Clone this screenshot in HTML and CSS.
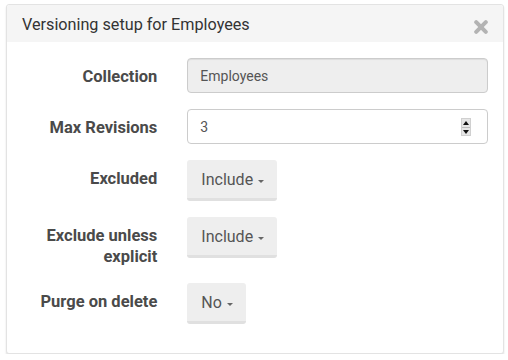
FILE: index.html
```html
<!DOCTYPE html>
<html>
<head>
<meta charset="utf-8">
<link rel="stylesheet" href="styles.css">
</head>
<body>
<div class="modal">
  <div class="modal-header">
    <h4 class="modal-title">Versioning setup for Employees</h4>
    <span class="close" aria-label="Close">
      <svg width="14" height="14" viewBox="0 0 14 14"><path d="M2.2 2.2 L11.8 11.8 M11.8 2.2 L2.2 11.8" stroke="#b3b3b3" stroke-width="4" stroke-linecap="round"/></svg>
    </span>
  </div>
  <div class="modal-body">
    <div class="form-group">
      <label class="control-label">Collection</label>
      <div class="control"><div class="form-control readonly">Employees</div></div>
    </div>
    <div class="form-group">
      <label class="control-label">Max Revisions</label>
      <div class="control">
        <div class="form-control number">3
          <span class="spinner"><span class="up"></span><span class="down"></span></span>
        </div>
      </div>
    </div>
    <div class="form-group">
      <label class="control-label">Excluded</label>
      <div class="control"><button class="btn">Include <span class="caret"></span></button></div>
    </div>
    <div class="form-group">
      <label class="control-label">Exclude unless explicit</label>
      <div class="control"><button class="btn">Include <span class="caret"></span></button></div>
    </div>
    <div class="form-group last">
      <label class="control-label">Purge on delete</label>
      <div class="control"><button class="btn">No <span class="caret"></span></button></div>
    </div>
  </div>
</div>
</body>
</html>
```

FILE: styles.css
```css
* { box-sizing: border-box; }
html, body { margin: 0; padding: 0; background: #fff; }
body {
  font-family: Roboto, "Liberation Sans", sans-serif;
  color: #333;
  padding: 4px 4px 0 6px;
}
.modal {
  width: 498px;
  border: 1px solid #e3e3e3;
  border-radius: 3px;
  background: #fff;
  box-shadow: 0 2px 2px rgba(0,0,0,0.12);
}
.modal-header {
  height: 37px;
  background: #f5f5f5;
  display: flex;
  align-items: center;
  justify-content: space-between;
  padding: 0 15px;
  border-radius: 3px 3px 0 0;
}
.modal-title {
  margin: 3px 0 0;
  font-size: 16.2px;
  font-weight: 400;
  color: #333;
  line-height: 20px;
}
.close {
  display: flex;
  width: 14px;
  height: 14px;
  margin-top: 6px;
}
.modal-body {
  padding: 16px 15px 13px;
}
.form-group {
  display: flex;
  margin: 0 -15px 16px;
}
.control-label {
  width: 33.3333%;
  padding: 8px 15px 0;
  text-align: right;
  font-weight: 700;
  font-size: 16.5px;
  line-height: 21px;
  color: #4a4a4a;
}
.control {
  width: 66.6667%;
  padding: 0 15px;
}
.form-control {
  position: relative;
  height: 35px;
  border: 1px solid #ccc;
  border-radius: 4px;
  padding: 0 12px;
  font-size: 14px;
  line-height: 34px;
  color: #555;
  background: #fff;
}
.form-control.readonly {
  background: #eee;
  box-shadow: inset 0 1px 1px rgba(0,0,0,0.075);
}
.spinner {
  position: absolute;
  right: 16px;
  top: 8px;
  width: 10px;
  height: 18px;
  background: #e6e6e6;
  border: 1px solid #d0d0d0;
  display: flex;
  flex-direction: column;
}
.spinner .up, .spinner .down {
  flex: 1;
  position: relative;
}
.spinner .up { border-bottom: 1px solid #bdbdbd; }
.spinner .up::after, .spinner .down::after {
  content: "";
  position: absolute;
  left: 1px;
  border-left: 3px solid transparent;
  border-right: 3px solid transparent;
}
.spinner .up::after { top: 2px; border-bottom: 4px solid #111; }
.spinner .down::after { top: 2px; border-top: 4px solid #111; }
.btn {
  font-family: Roboto, "Liberation Sans", sans-serif;
  font-size: 16px;
  color: #555;
  background: #eee;
  border: none;
  border-bottom: 3px solid #e0e0e0;
  border-radius: 3px;
  height: 41px;
  padding: 2px 13px 0 14px;
  line-height: 20px;
  cursor: pointer;
  display: inline-flex;
  align-items: center;
  gap: 5px;
}
.caret {
  display: inline-block;
  width: 0;
  height: 0;
  border-top: 3px solid #666;
  border-left: 3px solid transparent;
  border-right: 3px solid transparent;
  margin-top: 2px;
}
```
